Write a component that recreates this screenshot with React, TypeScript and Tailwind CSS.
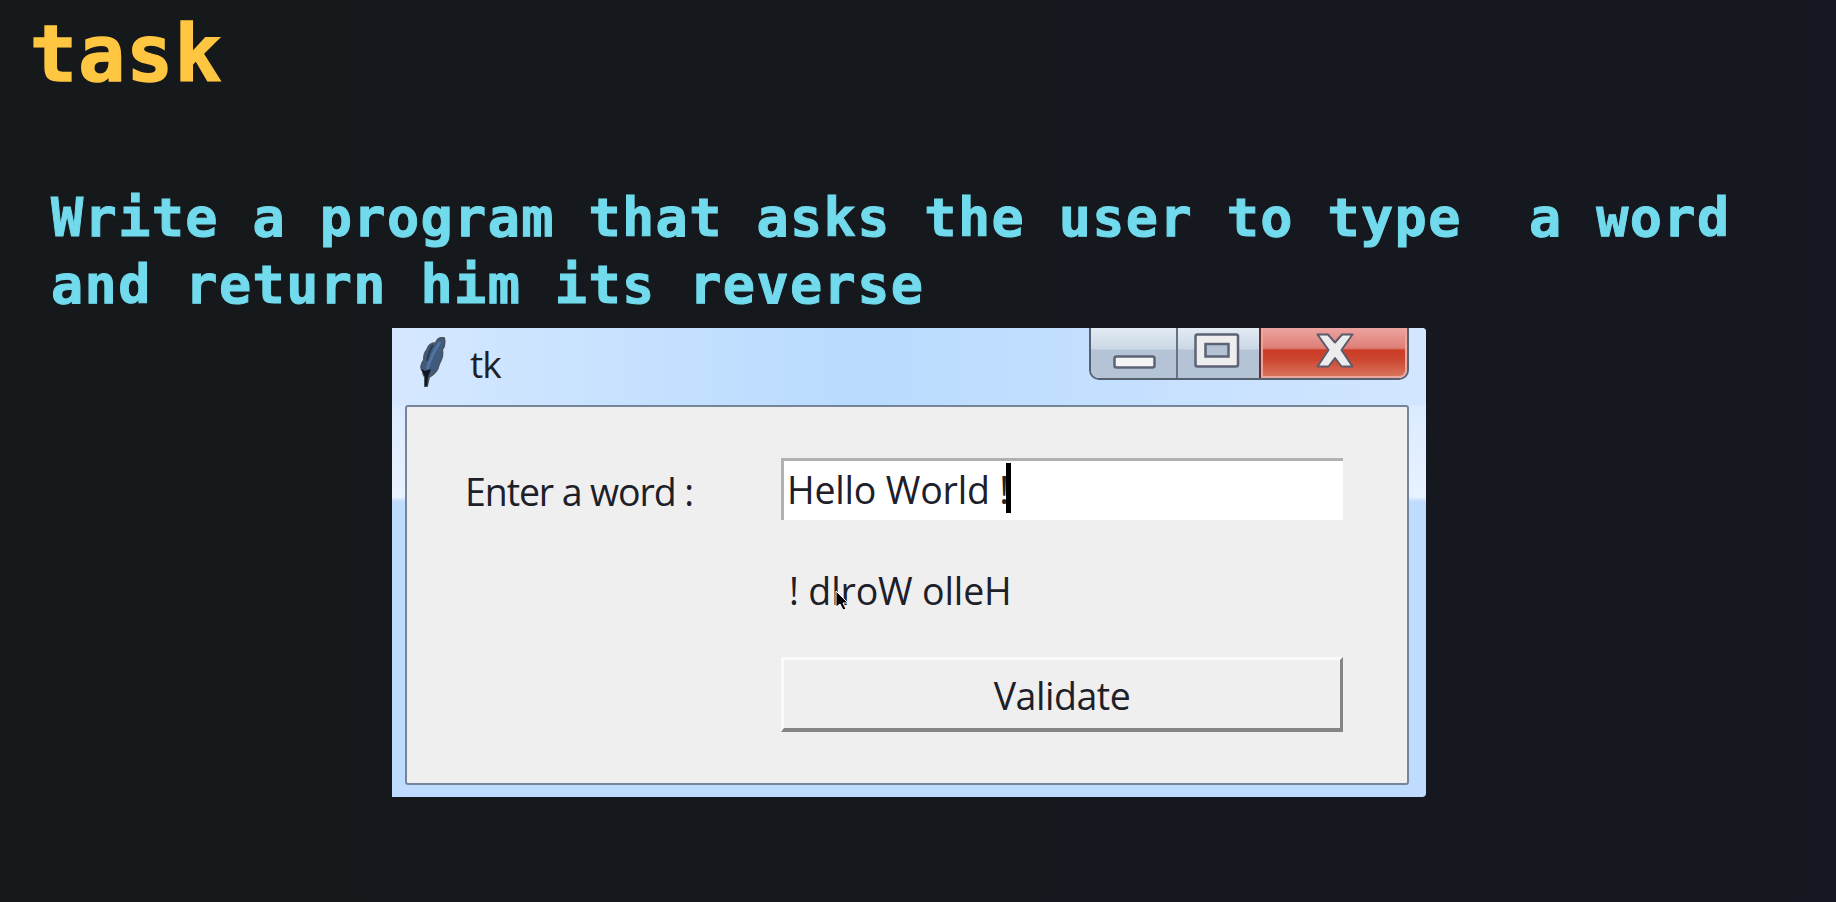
function MinimizeIcon() {
  return (
    <svg width="43" height="14" viewBox="0 0 43 14">
      <rect x="1.500" y="1.500" width="40" height="11" rx="2" fill="#f4f4f5" stroke="#5b6375" strokeWidth="2.500" />
    </svg>
  );
}

function MaximizeIcon() {
  return (
    <svg width="46" height="35" viewBox="0 0 46 35">
      <rect x="1.500" y="1.500" width="42.500" height="32" rx="2" fill="#efeeef" stroke="#5b6375" strokeWidth="2.500" />
      <rect x="11.500" y="11" width="23" height="12.500" fill="#b4c3d4" stroke="#5b6375" strokeWidth="2.500" />
    </svg>
  );
}

function CloseIcon() {
  return (
    <svg width="38" height="35" viewBox="0 0 38 35">
      <path
        d="M1.500 1.500H12L19 9.500L26 1.500H36.500L25.500 17L36.500 33.500H25.500L19 25L12.500 33.500H1.500L12.500 17Z"
        fill="#ececed"
        stroke="#5d5a6b"
        strokeWidth="2"
        strokeLinejoin="round"
      />
    </svg>
  );
}

function FeatherIcon() {
  return (
    <svg width="26" height="50" viewBox="0 0 26 50">
      <path
        d="M24 1C19 0 17 3 16 6C10 6 8 9 7 13C4 16 4 20 4 23C1 27 0 32 3 34C3 37 4 39 5 40L5 49L7 49L9 40C15 37 18 32 19 27C22 22 23 17 22 13C25 9 25 5 24 1Z"
        fill="#3f5b80"
        stroke="#4b5662"
        strokeWidth="2"
      />
      <path d="M20 5C14 14 10 23 7 32" fill="none" stroke="#5273a0" strokeWidth="3" />
      <path d="M13 8C9 14 8 18 7 24" fill="none" stroke="#2c3b50" strokeWidth="2" />
      <path d="M1 32L5 34L11 32L8 40L7 49L5 49L5 40Z" fill="#10161d" />
    </svg>
  );
}

export default function App() {
  return (
    <main className="h-[902px] w-[1836px] overflow-hidden bg-linear-to-r from-[#15191b] via-[#15181d] to-[#151820] font-['DejaVu_Sans_Mono',monospace] font-bold">
      <h1 className="h-[184px] pl-[30px] pt-[9px] text-[78px] leading-[90px] tracking-[1.2px] text-[#ffc641] [-webkit-text-stroke:1.5px_#ffc641]">task</h1>
      <p className="h-[144px] whitespace-pre pl-[51px] text-[53.500px] leading-[67px] tracking-[1.38px] text-[#72daed] [-webkit-text-stroke:1px_#72daed]">
        {"Write a program that asks the user to type  a word\nand return him its reverse"}
      </p>

      <section className="ml-[392px] flex h-[469px] w-[1034px] flex-col rounded-r-[4px] bg-linear-to-b from-[#cfe5ff] from-0% via-[#e9f2ff] via-36% to-[#bfdcff] to-37% pb-[12px] pl-[13px] pr-[17px] font-['Open_Sans',sans-serif] font-normal text-[#1d2029]">
        <header className="-ml-[13px] -mr-[17px] flex h-[77px] items-start rounded-tr-[4px] bg-linear-to-r from-[#d5e8ff] from-0% via-[#b9dbff] via-45% to-[#d2e6ff] pl-[28px] pr-[17px]">
          <div className="pt-[9px]">
            <FeatherIcon />
          </div>
          <span className="ml-[24px] mt-[11px] text-[37px] leading-[50px] tracking-[-1px]">tk</span>
          <div className="ml-auto flex h-[52px] w-[320px] overflow-hidden rounded-b-[10px] border-x-2 border-b-2 border-[#57606f]">
            <div className="flex w-[87px] justify-center border-r-2 border-[#667285] bg-linear-to-b from-[#e3ebf4] from-0% via-[#cbd8e5] via-42% to-[#b4c4d6] to-44% pl-[2px] pt-[27px]">
              <MinimizeIcon />
            </div>
            <div className="flex w-[81px] justify-center bg-linear-to-b from-[#e3ebf4] from-0% via-[#cbd8e5] via-42% to-[#b4c4d6] to-44% pr-[3px] pt-[5px]">
              <MaximizeIcon />
            </div>
            <div className="flex grow rounded-br-[8px] border-l-2 border-[#6b2b2b]">
              <div className="flex grow justify-center rounded-br-[8px] border-x-2 border-b-2 border-[#eba79e] bg-[linear-gradient(to_bottom,#eda3a0_0%,#dd7f76_42%,#cc3d27_46%,#cd452f_65%,#d9735b_100%)] pl-[1px] pt-[5px]">
                <CloseIcon />
              </div>
            </div>
          </div>
        </header>
        <div className="flex grow rounded-[3px] border-2 border-[#75869a] bg-[#efefef]">
          <label className="w-[374px] pl-[58px] pt-[60px] text-[37.500px] leading-[50px] tracking-[-1.100px]">Enter a word :</label>
          <div className="flex w-[562px] flex-col pt-[51px]">
            <div className="relative h-[62px] border-l-[3px] border-t-[3px] border-[#b1b1b1] bg-white pl-[3px] text-[37.500px] leading-[57px] tracking-[-0.200px]">
              Hello World !
              <span className="absolute left-[222px] top-[2px] h-[50px] w-[5px] bg-black" />
            </div>
            <div className="relative mt-[46px] h-[50px] pl-[8px] text-[37.500px] leading-[50px] tracking-[-0.150px]">
              ! dlroW olleH
              <svg className="absolute left-[54px] top-[24px]" width="14" height="22" viewBox="0 0 14 22">
                <path d="M1 1V17L5 14L8 20L11 19L8 13H13Z" fill="#000" stroke="#fff" strokeWidth="1" />
              </svg>
            </div>
            <button className="mt-[41px] h-[75px] border-b-4 border-l-[3px] border-r-[3px] border-t-[3px] border-b-[#858585] border-l-[#fafafa] border-r-[#858585] border-t-[#fafafa] pt-[4px] text-[37.500px] leading-[50px] tracking-[-0.450px]">
              Validate
            </button>
          </div>
        </div>
      </section>
    </main>
  );
}
